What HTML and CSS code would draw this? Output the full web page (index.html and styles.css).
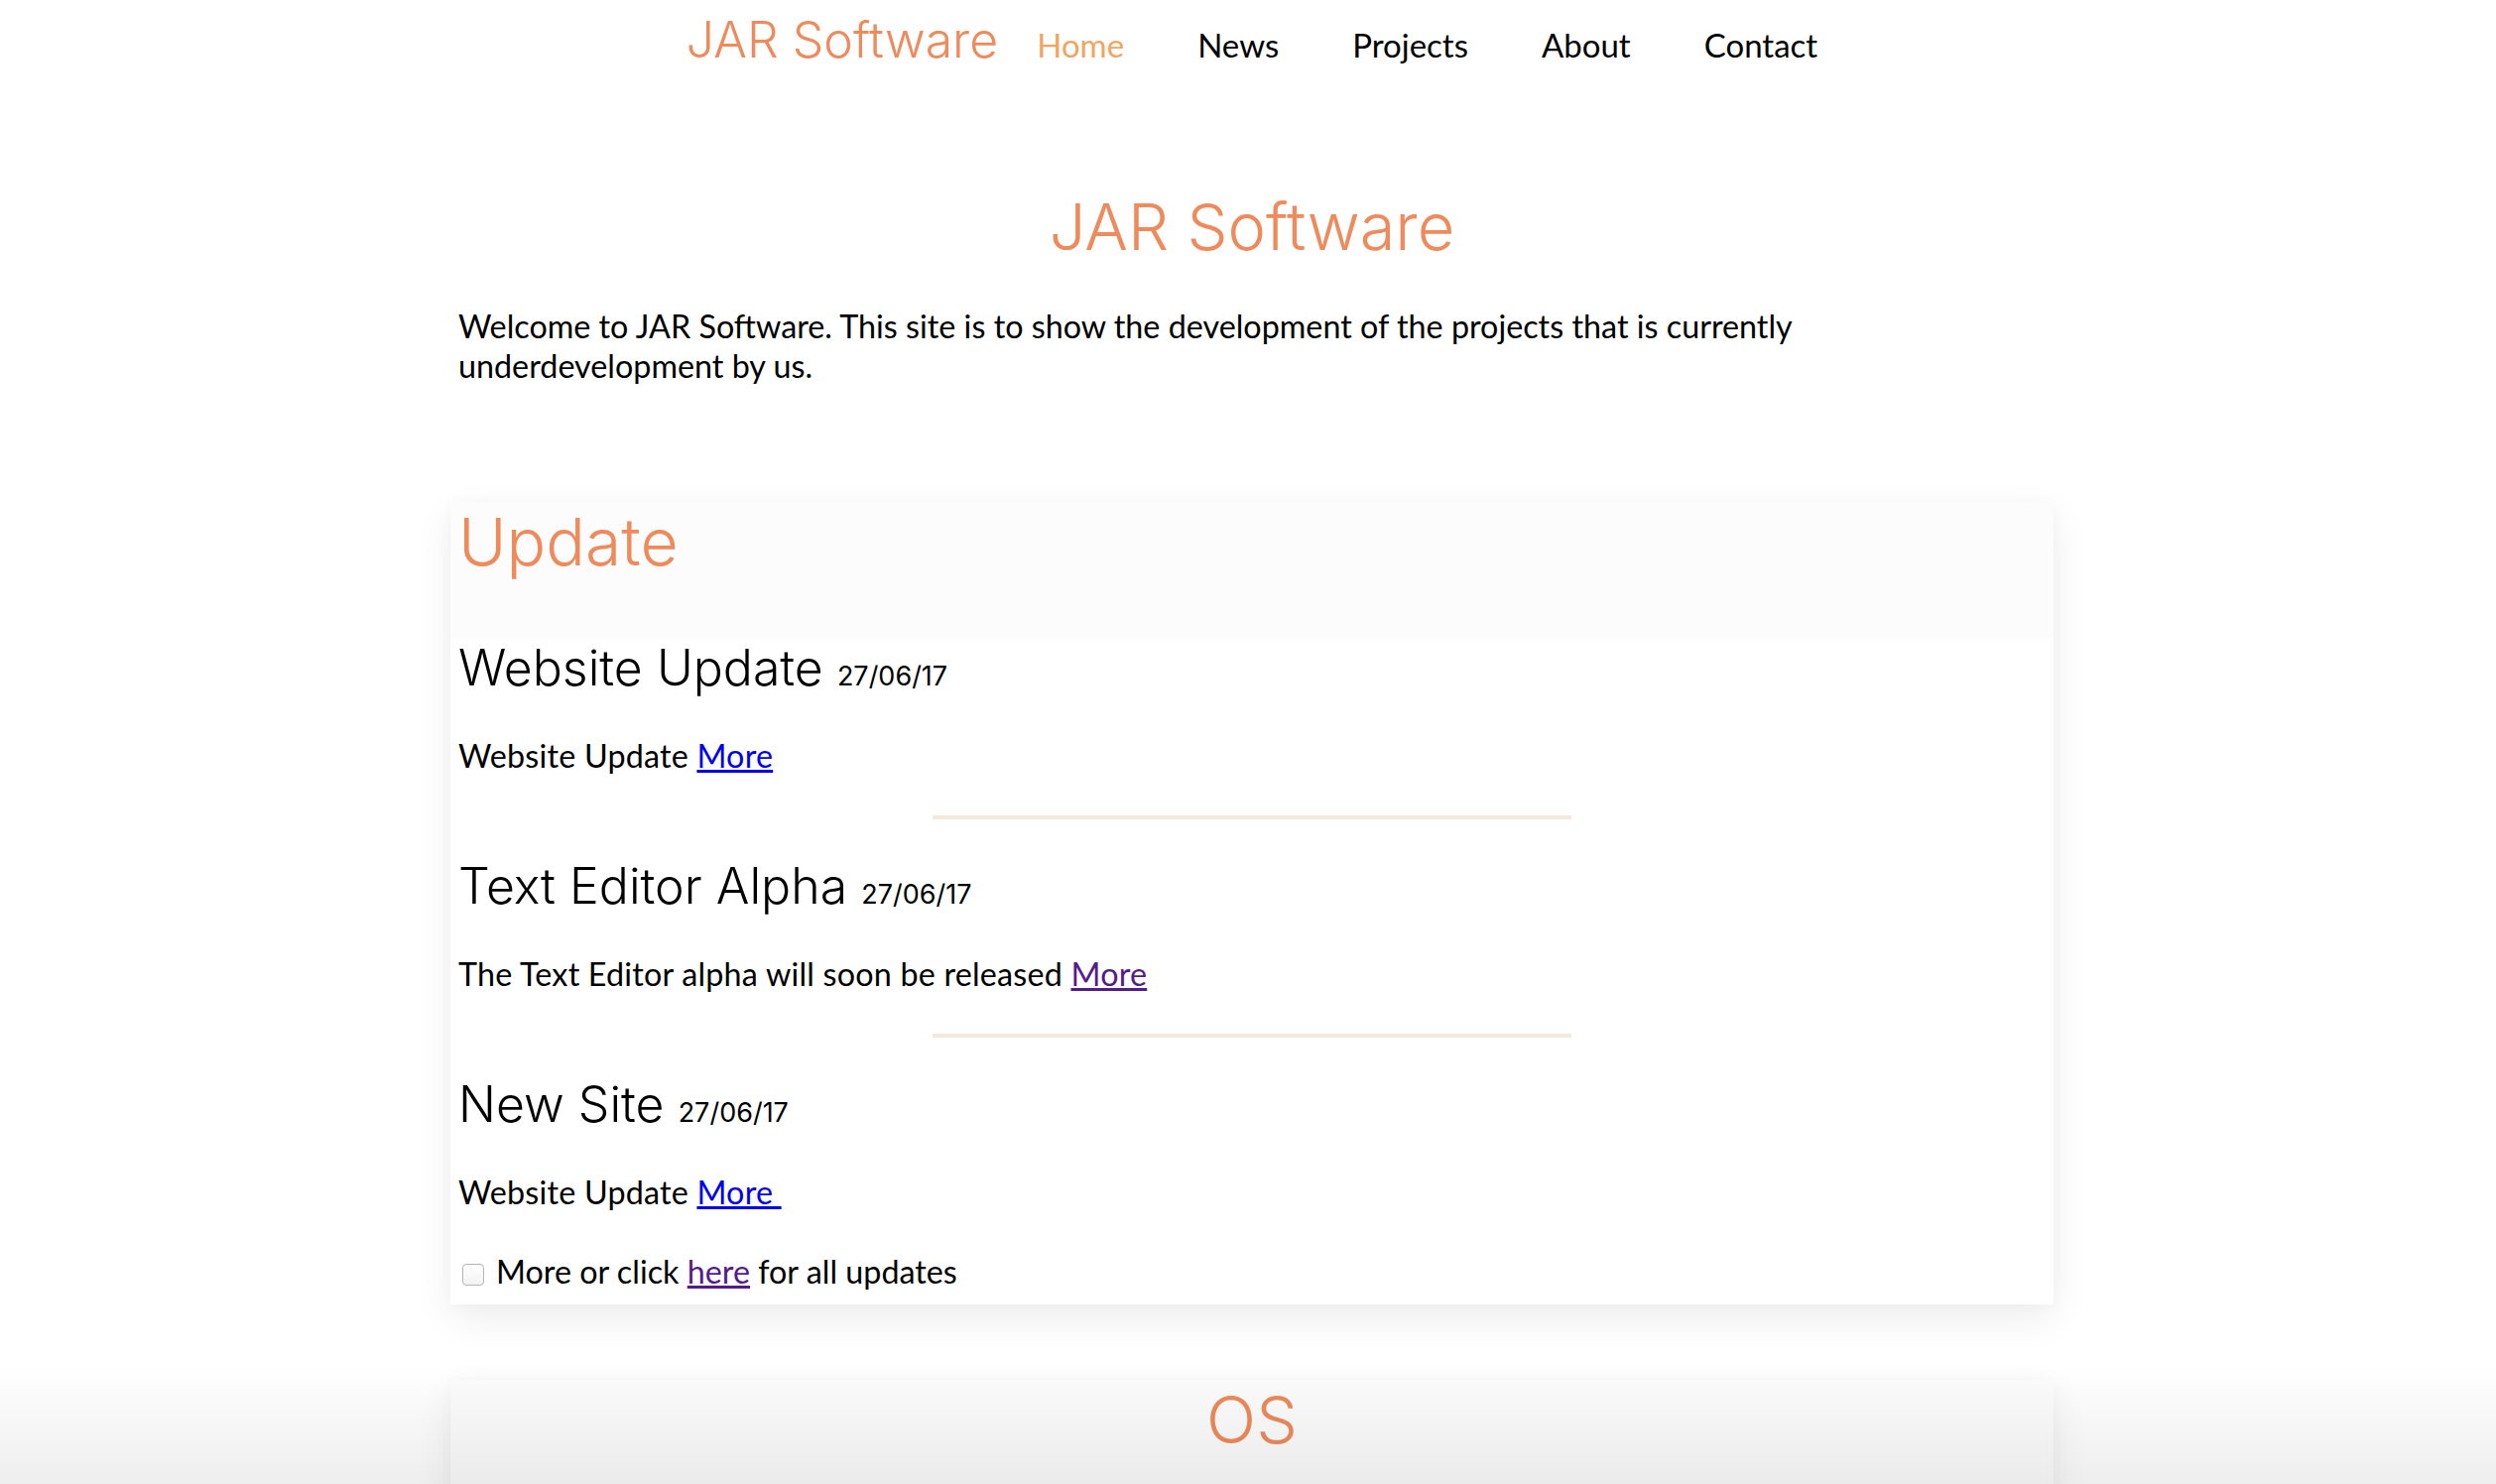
FILE: index.html
```html
<!DOCTYPE html>
<html lang="en">
<head>
<meta charset="utf-8">
<title>JAR Software</title>
<link rel="stylesheet" href="styles.css">
</head>
<body>
<nav class="topnav">
  <a class="logo" href="#">JAR Software</a>
  <ul class="navlinks">
    <li><a class="navlink active" href="#">Home</a></li>
    <li><a class="navlink" href="#">News</a></li>
    <li><a class="navlink" href="#">Projects</a></li>
    <li><a class="navlink" href="#">About</a></li>
    <li><a class="navlink" href="#">Contact</a></li>
  </ul>
</nav>
<main class="main">
  <h1 class="title">JAR Software</h1>
  <p class="intro">Welcome to JAR Software. This site is to show the development of the projects that is currently underdevelopment by us.</p>

  <section class="card">
    <div class="card-head"><h2 class="card-title">Update</h2></div>
    <div class="card-body">
      <article class="entry">
        <h3 class="entry-title">Website Update <span class="date">27/06/17</span></h3>
        <p class="entry-text">Website Update <a class="link" href="#">More</a></p>
      </article>
      <hr class="divider">
      <article class="entry">
        <h3 class="entry-title">Text Editor Alpha <span class="date">27/06/17</span></h3>
        <p class="entry-text">The Text Editor alpha will soon be released <a class="link visited" href="#">More</a></p>
      </article>
      <hr class="divider">
      <article class="entry">
        <h3 class="entry-title">New Site <span class="date">27/06/17</span></h3>
        <p class="entry-text">Website Update <a class="link" href="#">More&nbsp;</a></p>
      </article>
      <label class="more-line"><input class="check" type="checkbox"><span>More or click <a class="link visited" href="#">here</a> for all updates</span></label>
    </div>
  </section>

  <section class="card">
    <div class="card-head center"><h2 class="card-title">OS</h2></div>
    <div class="card-body tall"></div>
  </section>
</main>
<div class="bottom-fade"></div>
</body>
</html>
```

FILE: styles.css
```css
html, body {
  margin: 0;
  padding: 0;
  background: #ffffff;
}
body {
  font-family: "Lato", "Open Sans", sans-serif;
  color: #000;
}
.topnav {
  display: flex;
  justify-content: center;
  align-items: baseline;
  padding: 12px 0 0 45px;
  height: 68px;
}
.logo {
  font-family: "Inter", "Liberation Sans", sans-serif;
  font-weight: 300;
  font-size: 50px;
  line-height: 57px;
  color: #ee8a5b;
  text-decoration: none;
  margin-right: 2px;
}
.navlinks {
  display: flex;
  list-style: none;
  margin: 0;
  padding: 0;
}
.navlink {
  display: block;
  font-family: "Lato", "Open Sans", sans-serif;
  font-size: 33px;
  line-height: 40px;
  color: #000;
  text-decoration: none;
  padding: 0 37px;
}
.navlink.active {
  color: #f1a55f;
}
.main {
  width: 1616px;
  margin: 0 0 0 calc(50% - 804px);
}
.title {
  font-family: "Inter", "Liberation Sans", sans-serif;
  font-weight: 300;
  font-size: 65px;
  line-height: 80px;
  color: #ee8a5b;
  text-align: center;
  margin: 109px 0 0;
}
.intro {
  font-size: 32.3px;
  line-height: 40px;
  margin: 40px 8px 0;
}
.card {
  background: #fff;
  margin-top: 117px;
  box-shadow: 0 14px 36px rgba(0, 0, 0, 0.075), 0 0 16px rgba(0, 0, 0, 0.02);
}
.card + .card {
  margin-top: 76px;
}
.card-head {
  background: #fcfcfc;
  padding: 0 8px 56px;
  box-shadow: 0 2px 3px rgba(0, 0, 0, 0.012);
}
.card-head.center {
  text-align: center;
}
.card-title {
  font-family: "Inter", "Liberation Sans", sans-serif;
  font-weight: 300;
  font-size: 66px;
  line-height: 80px;
  color: #ee8a5b;
  margin: 0;
}
.card-body {
  padding: 1px 8px 13px;
}
.card-body.tall {
  height: 200px;
}
.entry-title {
  font-family: "Inter", "Liberation Sans", sans-serif;
  font-weight: 300;
  font-size: 50px;
  line-height: 60px;
  margin: 37px 0 0;
}
.entry:first-child .entry-title {
  margin-top: 0;
}
.date {
  font-size: 27px;
  font-weight: 400;
}
.entry-text {
  font-size: 32.3px;
  line-height: 40px;
  margin: 30px 0 0;
  letter-spacing: 0.2px;
}
.link {
  color: #0000ee;
  text-decoration: underline;
}
.link.visited {
  color: #551a8b;
}
.divider {
  width: 644px;
  height: 4px;
  border: 0;
  background: #f3e9dd;
  margin: 40px auto 0;
}
.more-line {
  display: flex;
  align-items: center;
  font-size: 32.3px;
  line-height: 40px;
  margin-top: 40px;
}
.check {
  appearance: none;
  -webkit-appearance: none;
  width: 22px;
  height: 22px;
  margin: 6px 12px 0 4px;
  border: 1px solid #b5b5b5;
  border-radius: 4px;
  background: linear-gradient(#ffffff, #f2f2f2);
  box-sizing: border-box;
}
.bottom-fade {
  position: fixed;
  left: 0;
  right: 0;
  bottom: 0;
  height: 120px;
  background: linear-gradient(rgba(0, 0, 0, 0), rgba(0, 0, 0, 0.065));
  pointer-events: none;
}
```
